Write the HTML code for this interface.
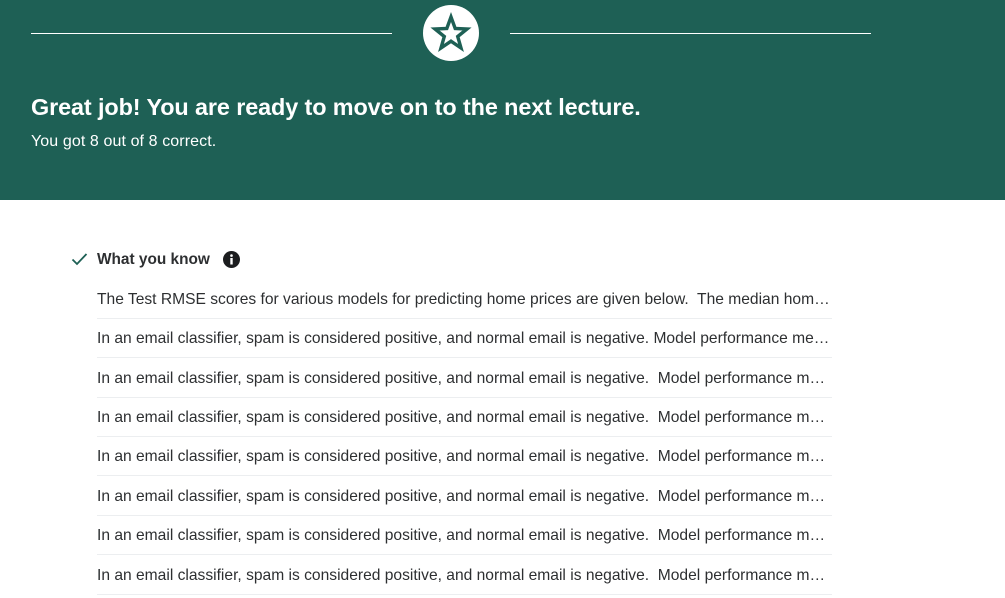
<!DOCTYPE html>
<html><head><style>
body{margin:0;width:1005px;height:598px;overflow:hidden;background:#fff;font-family:"Liberation Sans",sans-serif;color:#2d2f31}
.hd{position:absolute;left:0;top:0;width:1005px;height:200px;background:#1e6055;color:#fff}
.line{position:absolute;top:33px;height:1px;background:#fff}
.circ{position:absolute;left:423px;top:5px;width:56px;height:56px;border-radius:50%;background:#fff}
h1{position:absolute;left:31px;top:94px;margin:0;font-size:23.4px;font-weight:bold;letter-spacing:-0.1px}
.sub{position:absolute;left:31px;top:133px;font-size:16px;letter-spacing:0.1px}
.wk{position:absolute;left:97px;top:251px;font-size:15.4px;font-weight:bold}
.row{position:absolute;left:97px;width:735px;height:39px;line-height:41px;font-size:15.6px;white-space:nowrap;overflow:hidden;text-overflow:ellipsis;border-bottom:1px solid #eceef0}
</style></head><body>
<div class="hd">
<div class="line" style="left:31px;width:361px"></div>
<div class="line" style="left:510px;width:361px"></div>
<div class="circ"><svg width="56" height="56" viewBox="0 0 56 56"><polygon points="28,12 32.2,23.5 44,24 34.7,31.5 38,43 28,36.2 18,43 21.3,31.5 12,24 23.8,23.5" fill="none" stroke="#1e6055" stroke-width="3.4" stroke-linejoin="miter"/></svg></div>
<h1>Great job! You are ready to move on to the next lecture.</h1>
<div class="sub">You got 8 out of 8 correct.</div>
</div>
<svg style="position:absolute;left:71px;top:252px" width="17" height="14" viewBox="0 0 17 14"><path d="M1.5 7.5 L6 12 L15.5 2" fill="none" stroke="#1e6055" stroke-width="1.8"/></svg>
<div class="wk">What you know</div>
<svg style="position:absolute;left:223px;top:251px" width="17" height="17" viewBox="0 0 17 17"><circle cx="8.5" cy="8.5" r="8.5" fill="#1c1d1f"/><circle cx="8.5" cy="4.6" r="1.3" fill="#fff"/><rect x="7.3" y="7" width="2.4" height="6.5" fill="#fff"/></svg>
<div class="row" style="top:279px">The Test RMSE scores for various models for predicting home prices are given below.&nbsp; The median home price in the dataset is $500,000</div>
<div class="row" style="top:318px">In an email classifier, spam is considered positive, and normal email is negative. Model performance metrics are</div>
<div class="row" style="top:358px">In an email classifier, spam is considered positive, and normal email is negative.&nbsp; Model performance metrics are</div>
<div class="row" style="top:397px">In an email classifier, spam is considered positive, and normal email is negative.&nbsp; Model performance metrics are</div>
<div class="row" style="top:436px">In an email classifier, spam is considered positive, and normal email is negative.&nbsp; Model performance metrics are</div>
<div class="row" style="top:476px">In an email classifier, spam is considered positive, and normal email is negative.&nbsp; Model performance metrics are</div>
<div class="row" style="top:515px">In an email classifier, spam is considered positive, and normal email is negative.&nbsp; Model performance metrics are</div>
<div class="row" style="top:555px">In an email classifier, spam is considered positive, and normal email is negative.&nbsp; Model performance metrics are</div>
</body></html>
